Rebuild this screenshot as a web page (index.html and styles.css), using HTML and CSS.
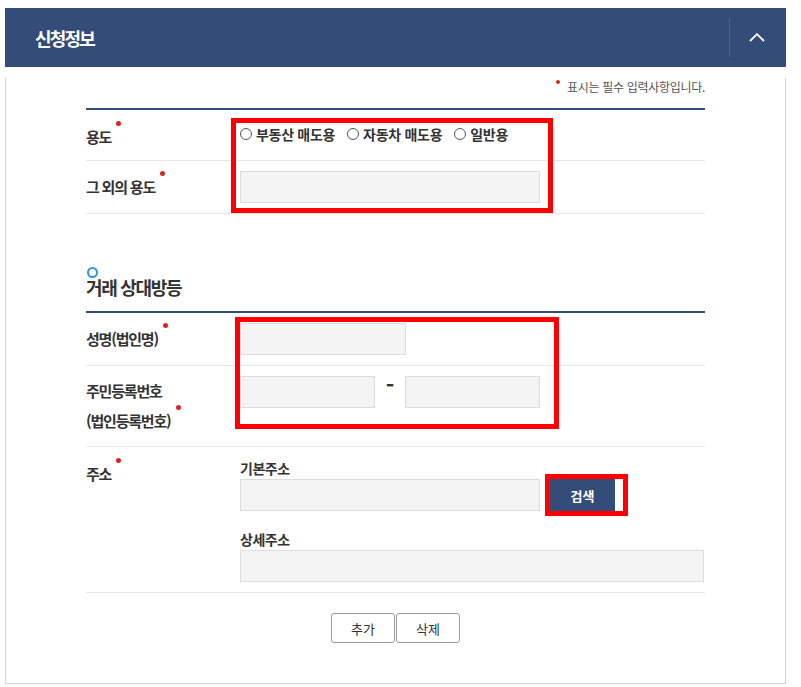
FILE: index.html
```html
<!DOCTYPE html>
<html lang="ko">
<head>
<meta charset="utf-8">
<title>신청정보</title>
<link rel="stylesheet" href="styles.css">
</head>
<body>
<div class="panel">
  <div class="panel-head">
    <h2 class="panel-title">신청정보</h2>
    <button class="toggle" type="button" aria-label="접기">
      <svg width="16" height="9" viewBox="0 0 16 9"><polyline points="1,8 8,1.2 15,8" fill="none" stroke="#fff" stroke-width="1.8"/></svg>
    </button>
  </div>
  <div class="panel-body">
    <p class="req-note"><span class="note-dot"></span>표시는 필수 입력사항입니다.</p>

    <div class="form-table">
      <div class="row row-top">
        <div class="th th-use"><span class="req">용도</span></div>
        <div class="td radios">
          <label class="radio"><input type="radio" name="use"><span>부동산 매도용</span></label>
          <label class="radio"><input type="radio" name="use"><span>자동차 매도용</span></label>
          <label class="radio"><input type="radio" name="use"><span>일반용</span></label>
        </div>
      </div>
      <div class="row">
        <div class="th"><span class="req">그 외의 용도</span></div>
        <div class="td"><input type="text" class="inp w300"></div>
      </div>
    </div>

    <div class="sec-title">
      <span class="ring"></span>
      <h3>거래 상대방등</h3>
    </div>

    <div class="form-table">
      <div class="row">
        <div class="th"><span class="req">성명(법인명)</span></div>
        <div class="td"><input type="text" class="inp w165"></div>
      </div>
      <div class="row">
        <div class="th th-two"><span class="req">주민등록번호<br>(법인등록번호)</span></div>
        <div class="td td-top">
          <input type="text" class="inp w135">
          <span class="dash">-</span>
          <input type="text" class="inp w135">
        </div>
      </div>
      <div class="row row-top row-addr">
        <div class="th th-addr"><span class="req">주소</span></div>
        <div class="td addr">
          <div class="sub-label">기본주소</div>
          <div class="addr-line">
            <input type="text" class="inp w300">
            <button type="button" class="btn-search">검색</button>
          </div>
          <div class="sub-label sub-gap">상세주소</div>
          <input type="text" class="inp wfull">
        </div>
      </div>
    </div>

    <div class="btns">
      <button type="button" class="btn-line">추가</button>
      <button type="button" class="btn-line">삭제</button>
    </div>
  </div>

  <div class="mark mark1"></div>
  <div class="mark mark2"></div>
  <div class="mark mark3"></div>
</div>
</body>
</html>
```

FILE: styles.css
```css
* { box-sizing: border-box; }
html, body { margin: 0; padding: 0; background: #fff; }
body {
  font-family: "Noto Sans CJK KR", "Noto Sans", sans-serif;
  color: #333;
}

.panel {
  position: relative;
  width: 781px;
  margin: 8px 0 0 5px;
}

.panel-head {
  height: 59px;
  background: #344c78;
  display: flex;
  align-items: center;
  justify-content: space-between;
}
.panel-title {
  margin: 0;
  padding-left: 30px;
  color: #fff;
  font-size: 18px;
  font-weight: 700;
  letter-spacing: -1.8px;
  line-height: 24px;
}
.toggle {
  width: 57px;
  height: 39px;
  border: 0;
  border-left: 1px solid #4b6190;
  background: transparent;
  padding: 0 2px 0 0;
  display: flex;
  align-items: center;
  justify-content: center;
  cursor: pointer;
}

.panel-body {
  border: 1px solid #d2d2d2;
  border-top: 0;
  padding: 0 80px 40px;
}

.req-note {
  margin: 11px 0 12px;
  text-align: right;
  font-size: 12px;
  line-height: 18px;
  letter-spacing: -0.3px;
  color: #555;
}
.note-dot {
  display: inline-block;
  width: 4px;
  height: 4px;
  border-radius: 50%;
  background: #d7261e;
  margin-right: 7px;
  position: relative;
  top: -8px;
}

.form-table {
  border-top: 2px solid #344c78;
}
.row {
  display: flex;
  align-items: center;
  padding: 10px 0;
  border-bottom: 1px solid #e6e6e6;
}
.row-top { align-items: flex-start; padding: 0; height: 51px; }
.row-addr { height: auto; }

.th {
  width: 154px;
  flex: none;
  font-size: 15px;
  font-weight: 700;
  letter-spacing: -1.2px;
  line-height: 20px;
  color: #333;
}
.th-use { padding-top: 17px; }
.th-two { line-height: 30px; }
.th-addr { padding-top: 17px; }

.req::after {
  content: "";
  display: inline-block;
  width: 5px;
  height: 5px;
  border-radius: 50%;
  background: #d7261e;
  margin-left: 5px;
  position: relative;
  top: -17px;
}

.td { display: flex; align-items: center; }
.td-top { align-self: flex-start; }

.radios { padding-top: 14px; line-height: 20px; }
.radio {
  display: inline-flex;
  align-items: center;
  margin-right: 12px;
  font-size: 14px;
  font-weight: 700;
  letter-spacing: -0.3px;
  color: #333;
  cursor: pointer;
}
.radio input {
  appearance: none;
  -webkit-appearance: none;
  width: 12px;
  height: 12px;
  margin: 0 4px 0 0;
  border: 1px solid #555;
  border-radius: 50%;
  background: #fff;
}

.inp {
  height: 32px;
  border: 1px solid #dcdcdc;
  background: #f4f4f4;
  margin: 0;
  padding: 0 8px;
  font: inherit;
  font-size: 13px;
}
.w300 { width: 300px; }
.w165 { width: 166px; }
.w135 { width: 135px; }
.wfull { width: 464px; }

.dash {
  width: 30px;
  text-align: center;
  align-self: flex-start;
  font-size: 23px;
  font-weight: 700;
  line-height: 16px;
  color: #333;
}

.sec-title {
  margin-top: 53px;
  margin-bottom: 14px;
}
.ring {
  display: block;
  width: 11px;
  height: 11px;
  margin-left: 1px;
  border: 2.5px solid #2f95dc;
  border-radius: 50%;
}
.sec-title h3 {
  margin: -1px 0 0;
  font-size: 18px;
  font-weight: 700;
  letter-spacing: -1.3px;
  line-height: 20px;
  color: #333;
}

.addr {
  flex-direction: column;
  align-items: flex-start;
  padding: 11px 0 10px;
}
.sub-label {
  font-size: 14px;
  font-weight: 700;
  letter-spacing: -0.5px;
  line-height: 21px;
  color: #333;
}
.sub-gap { margin-top: 18px; }
.addr-line { display: flex; align-items: center; }
.btn-search {
  width: 65px;
  height: 32px;
  margin-left: 10px;
  border: 0;
  background: #344c78;
  color: #fff;
  font: inherit;
  font-size: 13px;
  font-weight: 700;
}

.btns {
  margin-top: 20px;
  display: flex;
  justify-content: center;
  gap: 1px;
}
.btn-line {
  width: 64px;
  height: 30px;
  border: 1px solid #9a9a9a;
  border-radius: 3px;
  background: #fff;
  color: #333;
  font: inherit;
  font-size: 13px;
  padding: 0;
}

.mark {
  position: absolute;
  border: 5px solid #ff0000;
  pointer-events: none;
}
.mark1 { left: 226px; top: 110px; width: 322px; height: 95px; }
.mark2 { left: 230px; top: 309px; width: 324px; height: 112px; }
.mark3 { left: 540px; top: 466px; width: 83px; height: 42px; }
```
